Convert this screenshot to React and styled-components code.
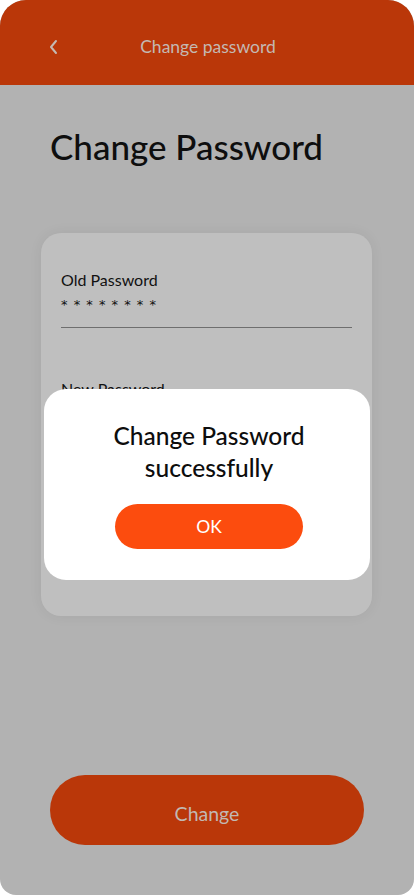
import React from 'react'
import styled, { createGlobalStyle } from 'styled-components'

const Global = createGlobalStyle`
    html, body {
        margin: 0;
        padding: 0;
        background: #ffffff;
    }
    * {
        box-sizing: border-box;
    }
`

const Screen = styled.div`
    position: relative;
    width: 414px;
    height: 895px;
    display: flex;
    flex-direction: column;
    background: #b2b2b2;
    border-radius: 26px 26px 16px 16px;
    overflow: hidden;
    font-family: Lato, 'Noto Sans', sans-serif;
`

const Header = styled.div`
    height: 85px;
    flex-shrink: 0;
    background: #ba3709;
    display: flex;
    align-items: center;
    justify-content: center;
    position: relative;
    padding-top: 8px;
`

const HeaderTitle = styled.span`
    color: #c4b9b2;
    font-size: 17.5px;
    margin-left: 2px;
`

const Back = styled.div`
    position: absolute;
    left: 47px;
    top: 38px;
    width: 14px;
    height: 18px;
    display: flex;
`

const Body = styled.div`
    flex: 1;
    display: flex;
    flex-direction: column;
    padding: 0 50px 50px 41px;
`

const Title = styled.h1`
    margin: 40px 0 0 9px;
    font-size: 35px;
    line-height: 42px;
    font-weight: 500;
    color: #0e0e0e;
`

const Card = styled.div`
    margin-top: 66px;
    width: 331px;
    height: 383px;
    background: #bfbfbf;
    border-radius: 20px;
    box-shadow: 0 0 14px rgba(0, 0, 0, 0.06);
    padding: 36px 20px 0 20px;
    display: flex;
    flex-direction: column;
    gap: 50px;
`

const Field = styled.div`
    display: flex;
    flex-direction: column;
    border-bottom: 1px solid #6e6e6e;
    height: 59px;
`

const Label = styled.span`
    font-size: 16px;
    line-height: 22px;
    color: #111;
`

const Value = styled.span`
    font-family: 'DejaVu Sans', sans-serif;
    font-size: 13px;
    line-height: 20px;
    letter-spacing: 1px;
    color: #111;
    margin-top: 4px;
`

const Spacer = styled.div`
    flex: 1;
`

const MainButton = styled.button`
    width: 314px;
    height: 70px;
    margin-left: 9px;
    border: none;
    border-radius: 35px;
    background: #ba3709;
    color: #c2b8b2;
    font-family: inherit;
    font-size: 19.5px;
    padding-top: 8px;
`

const Modal = styled.div`
    position: absolute;
    left: 44px;
    top: 389px;
    width: 326px;
    height: 191px;
    background: #ffffff;
    border-radius: 22px;
    display: flex;
    flex-direction: column;
    align-items: center;
    padding-top: 31px;
`

const ModalText = styled.p`
    margin: 0 0 0 4px;
    text-align: center;
    font-size: 24.5px;
    line-height: 32px;
    font-weight: 500;
    color: #0d0d0d;
`

const OkButton = styled.button`
    margin: 20px 0 0 4px;
    width: 188px;
    height: 45px;
    border: none;
    border-radius: 23px;
    background: #fc4c0e;
    color: #ffffff;
    font-family: inherit;
    font-size: 17.5px;
`

const App = () => {
    const fields = [
        { label: 'Old Password', value: '********' },
        { label: 'New Password', value: '********' },
        { label: 'Confirm Password', value: '********' },
    ]
    return (
        <>
            <Global />
            <Screen>
                <Header>
                    <Back>
                        <svg width="14" height="18" viewBox="0 0 14 18">
                            <path d="M9 3 L4 9 L9 15" fill="none" stroke="#c4b9b2" strokeWidth="2" strokeLinecap="round" strokeLinejoin="round" />
                        </svg>
                    </Back>
                    <HeaderTitle>Change password</HeaderTitle>
                </Header>
                <Body>
                    <Title>Change Password</Title>
                    <Card>
                        {fields.map(f => (
                            <Field key={f.label}>
                                <Label>{f.label}</Label>
                                <Value>{f.value.split('').join(' ')}</Value>
                            </Field>
                        ))}
                    </Card>
                    <Spacer />
                    <MainButton>Change</MainButton>
                </Body>
                <Modal>
                    <ModalText>Change Password<br />successfully</ModalText>
                    <OkButton>OK</OkButton>
                </Modal>
            </Screen>
        </>
    )
}

export default App
